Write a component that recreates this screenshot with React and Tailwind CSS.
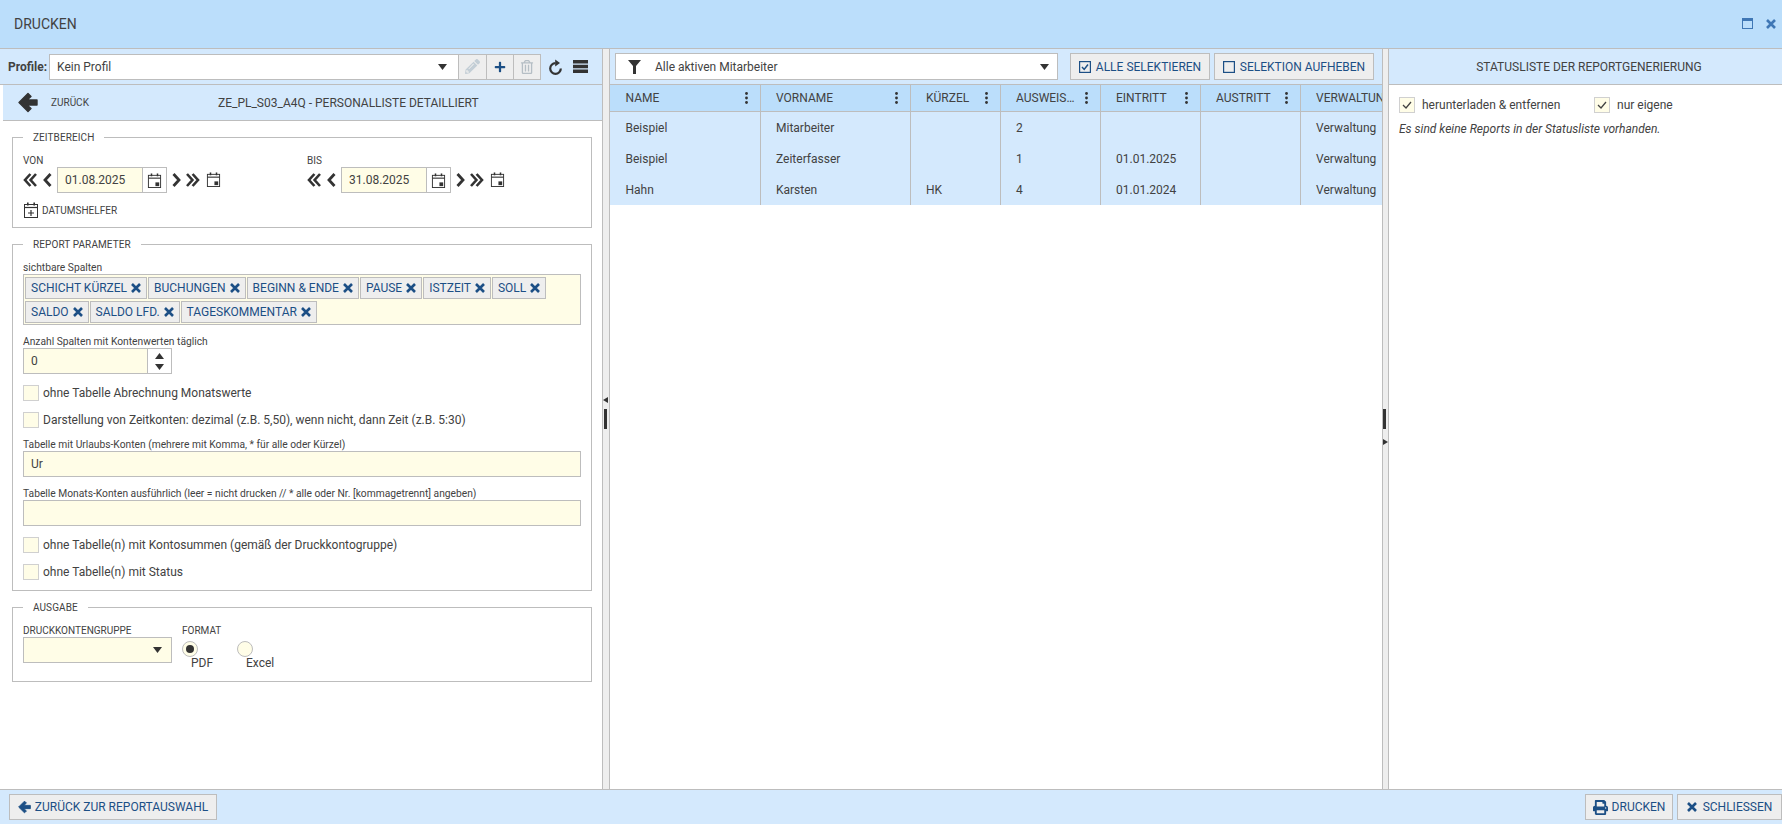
import React from 'react';
import { FaPrint, FaPencilAlt, FaPlus, FaRegTrashAlt } from 'react-icons/fa';

const Caret = ({ className = '' }) => (
  <svg width="9" height="6" viewBox="0 0 9 6" className={className}><polygon points="0,0 9,0 4.5,6" fill="#333" /></svg>
);

const XIcon = ({ size = 10, color = '#1c4f85', w = 2.6 }) => (
  <svg width={size} height={size} viewBox="0 0 10 10" fill="none" className="shrink-0"><path d="M1 1l8 8M9 1l-8 8" stroke={color} strokeWidth={w} /></svg>
);

const ArrowLeft = ({ w = 20, h = 21, color = '#333' }) => (
  <svg width={w} height={h} viewBox="0 0 20 21" className="shrink-0">
    <path d="M1 10.5L10 1.5L13 4.5L9 8H19V13H9L13 16.5L10 19.5Z" fill={color} stroke={color} strokeWidth="1.4" strokeLinejoin="round" />
  </svg>
);

const ChevL = () => (
  <svg width="9" height="14" viewBox="0 0 9 14" fill="none" className="shrink-0"><path d="M7.5 1L2 7l5.5 6" stroke="#333" strokeWidth="2.8" /></svg>
);
const ChevR = () => (
  <svg width="9" height="14" viewBox="0 0 9 14" fill="none" className="shrink-0"><path d="M1.5 1L7 7l-5.5 6" stroke="#333" strokeWidth="2.8" /></svg>
);
const DChevL = () => (
  <svg width="14" height="14" viewBox="0 0 14 14" fill="none" className="shrink-0"><path d="M7.4 1L2 7l5.4 6M13 1L7.6 7l5.4 6" stroke="#333" strokeWidth="2.6" /></svg>
);
const DChevR = () => (
  <svg width="14" height="14" viewBox="0 0 14 14" fill="none" className="shrink-0"><path d="M1 1l5.4 6L1 13M6.6 1L12 7l-5.4 6" stroke="#333" strokeWidth="2.6" /></svg>
);

const Cal = ({ plus = false, size = 15 }) => (
  <svg width={size} height={size} viewBox="0 0 16 16" fill="none" className="shrink-0">
    <rect x="1.5" y="2.5" width="13" height="13" stroke="#333" />
    <path d="M1.5 5.5h13" stroke="#333" strokeWidth="1.2" />
    <rect x="4" y="0.5" width="1.6" height="3" fill="#333" />
    <rect x="10.4" y="0.5" width="1.6" height="3" fill="#333" />
    {plus ? (
      <path d="M8 8v6M5 11h6" stroke="#333" strokeWidth="1.2" />
    ) : (
      <rect x="9" y="10" width="4" height="4" fill="#333" />
    )}
  </svg>
);

const Refresh = () => (
  <svg width="15" height="16" viewBox="0 0 15 16" fill="none" className="shrink-0">
    <path d="M7.5 4.2A5.3 5.3 0 1 0 12.8 9.5" stroke="#333" strokeWidth="2.2" />
    <polygon points="7.2,0.5 7.2,7.5 12,4" fill="#333" />
  </svg>
);

const Bars = () => (
  <svg width="15" height="13" viewBox="0 0 15 13" className="shrink-0"><path d="M0 0h15v3.4H0zM0 4.8h15v3.4H0zM0 9.6h15V13H0z" fill="#333" /></svg>
);

const Dots = () => (
  <svg width="3" height="12" viewBox="0 0 3 12" className="shrink-0"><circle cx="1.5" cy="1.5" r="1.4" fill="#333" /><circle cx="1.5" cy="6" r="1.4" fill="#333" /><circle cx="1.5" cy="10.5" r="1.4" fill="#333" /></svg>
);

const Funnel = () => (
  <svg width="13" height="14" viewBox="0 0 13 14" className="shrink-0"><polygon points="0,0 13,0 8,6 8,14 5,14 5,6" fill="#333" /></svg>
);

const BoxIcon = ({ checked }) => (
  <svg width="12" height="12" viewBox="0 0 12 12" fill="none" className="shrink-0">
    <rect x="0.6" y="0.6" width="10.8" height="10.8" stroke="#1c4f85" strokeWidth="1.2" />
    {checked && <path d="M3 6l2.2 2.4L9 3.5" stroke="#1c4f85" strokeWidth="1.5" />}
  </svg>
);

const Legend = ({ children }) => (
  <legend className="px-[10px] text-[10px] leading-[14px] h-[14px] text-[#424242] uppercase tracking-[0.1px]"><span className="block translate-y-px">{children}</span></legend>
);

const Label = ({ children, className = '' }) => (
  <div className={`leading-[12px] h-[12px] text-[#424242] whitespace-nowrap ${className || 'text-[10px]'}`}>{children}</div>
);

const DateGroup = ({ label, value, className = '' }) => (
  <div className={className}>
    <Label className="text-[10px] uppercase translate-y-px">{label}</Label>
    <div className="mt-px flex items-center h-[26px]">
      <DChevL />
      <span className="ml-[6px] flex"><ChevL /></span>
      <div className="ml-[5px] w-[110px] h-[26px] bg-[#fffde7] border border-[#bdbdbd] flex items-center">
        <span className="flex-1 pl-[7px] text-[12px] text-[#424242]">{value}</span>
        <span className="w-[24px] h-full border-l border-[#bdbdbd] bg-white flex items-center justify-center"><Cal /></span>
      </div>
      <span className="ml-[5px] flex"><ChevR /></span>
      <span className="ml-[5px] flex"><DChevR /></span>
      <span className="ml-[6px] -mt-[1px] flex"><Cal /></span>
    </div>
  </div>
);

const Tag = ({ children }) => (
  <span className="h-[22px] bg-[#eeeeee] border border-[#bdbdbd] flex items-center pl-[5px] pr-[5px] text-[12px] text-[#1c4f85] whitespace-nowrap gap-[4px]">
    {children}
    <XIcon />
  </span>
);

const CheckRow = ({ children, className = '' }) => (
  <div className={`flex items-center h-[16px] ${className}`}>
    <span className="w-[16px] h-[16px] bg-[#fffde7] border border-[#d0d0d0] shrink-0" />
    <span className="ml-[4px] text-[12px] text-[#424242] whitespace-nowrap">{children}</span>
  </div>
);

const Checked = ({ children, className = '' }) => (
  <div className={`flex items-center ${className}`}>
    <span className="w-[16px] h-[16px] bg-[#fffde7] border border-[#d0d0d0] flex items-center justify-center shrink-0">
      <svg width="10" height="8" viewBox="0 0 10 8" fill="none"><path d="M1 4l3 3 5-6" stroke="#424242" strokeWidth="1.3" /></svg>
    </span>
    <span className="ml-[7px] text-[12px] text-[#424242] whitespace-nowrap">{children}</span>
  </div>
);

const Btn = ({ children, className = '' }) => (
  <button className={`bg-[#eeeeee] border border-[#bdbdbd] flex items-center justify-center text-[12px] text-[#1c4f85] uppercase whitespace-nowrap ${className}`}>{children}</button>
);

const cols = [
  { t: 'NAME', w: 'w-[151px]' },
  { t: 'VORNAME', w: 'w-[150px]' },
  { t: 'KÜRZEL', w: 'w-[90px]' },
  { t: 'AUSWEIS…', w: 'w-[100px]' },
  { t: 'EINTRITT', w: 'w-[100px]' },
  { t: 'AUSTRITT', w: 'w-[100px]' },
  { t: 'VERWALTUNG', w: 'w-[81px]', last: true },
];
const rows = [
  ['Beispiel', 'Mitarbeiter', '', '2', '', '', 'Verwaltung'],
  ['Beispiel', 'Zeiterfasser', '', '1', '01.01.2025', '', 'Verwaltung'],
  ['Hahn', 'Karsten', 'HK', '4', '01.01.2024', '', 'Verwaltung'],
];

const Splitter = ({ children, className = '' }) => (
  <div className={`relative shrink-0 bg-[#eeeeee] border-x border-[#bdbdbd] ${className}`}>{children}</div>
);

export default function App() {
  return (
    <div className="w-full h-screen flex flex-col bg-white overflow-hidden font-['Roboto',sans-serif] text-[#424242]">
      <header className="h-[49px] shrink-0 bg-[#bbdefb] border-b border-[#bdbdbd] flex items-center pl-[14px] pr-[6px]">
        <span className="text-[14px] text-[#424242] flex-1">DRUCKEN</span>
        <svg width="11" height="11" viewBox="0 0 11 11" fill="none" className="mr-[13px] -mt-[1px]"><rect x="0.5" y="0.5" width="10" height="10" stroke="#3f77b5" /><rect x="0" y="0" width="11" height="3" fill="#3f77b5" /></svg>
        <span className="-mt-[1px] flex"><XIcon color="#3f77b5" /></span>
      </header>

      <div className="flex-1 flex min-h-0">
        {/* left */}
        <div className="w-[602px] shrink-0 flex flex-col pl-[3px]">
          <div className="-ml-[3px] pl-[3px] h-[36px] shrink-0 bg-[#d4e9fd] border-b border-[#bdbdbd] flex items-center">
            <span className="ml-[5px] w-[41px] text-[12px] font-bold text-[#424242]">Profile:</span>
            <div className="w-[410px] h-[26px] bg-white border border-[#bdbdbd] flex items-center pl-[7px] pr-[11px]">
              <span className="flex-1 text-[12px]">Kein Profil</span>
              <Caret />
            </div>
            <div className="flex h-[26px]">
              <span className="w-[28px] bg-[#eeeeee] border border-l-0 border-[#bdbdbd] flex items-center justify-center"><FaPencilAlt className="text-[15px] text-[#c3ced6]" /></span>
              <span className="w-[27px] bg-[#eeeeee] border border-l-0 border-[#bdbdbd] flex items-center justify-center"><FaPlus className="text-[12px] text-[#1c4f85]" /></span>
              <span className="w-[27px] bg-[#eeeeee] border border-l-0 border-[#bdbdbd] flex items-center justify-center"><FaRegTrashAlt className="text-[14px] text-[#b5bec5]" /></span>
            </div>
            <span className="ml-[7px] flex"><Refresh /></span>
            <span className="ml-[10px] -mt-[1px] flex"><Bars /></span>
          </div>
          <div className="h-[36px] shrink-0 bg-[#d4e9fd] border-b border-[#bdbdbd] flex items-center relative">
            <span className="ml-[15px] flex"><ArrowLeft /></span>
            <span className="ml-[13px] text-[10px] text-[#424242]">ZURÜCK</span>
            <span className="absolute left-[215px] text-[12px] text-[#424242] whitespace-nowrap">ZE_PL_S03_A4Q - PERSONALLISTE DETAILLIERT</span>
          </div>

          <div className="pl-[9px] pr-[10px] flex-1 min-h-0">
            <fieldset className="mt-[9px] border border-[#bdbdbd] px-[10px] pb-[9px]">
              <Legend>Zeitbereich</Legend>
              <div className="pt-[10px] flex">
                <DateGroup label="Von" value="01.08.2025" className="w-[284px]" />
                <DateGroup label="Bis" value="31.08.2025" />
              </div>
              <div className="mt-[9px] flex items-center h-[16px] gap-[3px]">
                <Cal plus size={16} />
                <span className="text-[10px] text-[#424242]">DATUMSHELFER</span>
              </div>
            </fieldset>

            <fieldset className="mt-[9px] border border-[#bdbdbd] px-[10px] pb-[10px]">
              <Legend>Report Parameter</Legend>
              <Label className="mt-[11px] text-[10.25px]">sichtbare Spalten</Label>
              <div className="h-[51px] bg-[#fffde7] border border-[#bdbdbd] p-[1px] pt-[2px] flex flex-wrap content-start gap-x-[1px] gap-y-[2px]">
                <Tag>SCHICHT KÜRZEL</Tag>
                <Tag>BUCHUNGEN</Tag>
                <Tag>BEGINN &amp; ENDE</Tag>
                <Tag>PAUSE</Tag>
                <Tag>ISTZEIT</Tag>
                <Tag>SOLL</Tag>
                <Tag>SALDO</Tag>
                <Tag>SALDO LFD.</Tag>
                <Tag>TAGESKOMMENTAR</Tag>
              </div>
              <Label className="mt-[11px] text-[10.25px]">Anzahl Spalten mit Kontenwerten täglich</Label>
              <div className="w-[149px] h-[26px] flex border border-[#bdbdbd] bg-white">
                <span className="w-[124px] bg-[#fffde7] border-r border-[#bdbdbd] pl-[7px] flex items-center text-[12px]">0</span>
                <span className="flex-1 flex flex-col items-center justify-center gap-[5px]">
                  <Caret className="rotate-180" />
                  <Caret />
                </span>
              </div>
              <CheckRow className="mt-[11px]">ohne Tabelle Abrechnung Monatswerte</CheckRow>
              <CheckRow className="mt-[11px]">Darstellung von Zeitkonten: dezimal (z.B. 5,50), wenn nicht, dann Zeit (z.B. 5:30)</CheckRow>
              <Label className="mt-[11px] text-[10.25px]">Tabelle mit Urlaubs-Konten (mehrere mit Komma, * für alle oder Kürzel)</Label>
              <div className="h-[26px] bg-[#fffde7] border border-[#bdbdbd] pl-[7px] flex items-center text-[12px]">Ur</div>
              <Label className="mt-[11px] text-[10.25px]">Tabelle Monats-Konten ausführlich (leer = nicht drucken // * alle oder Nr. [kommagetrennt] angeben)</Label>
              <div className="h-[26px] bg-[#fffde7] border border-[#bdbdbd]" />
              <CheckRow className="mt-[11px]">ohne Tabelle(n) mit Kontosummen (gemäß der Druckkontogruppe)</CheckRow>
              <CheckRow className="mt-[11px]">ohne Tabelle(n) mit Status</CheckRow>
            </fieldset>

            <fieldset className="mt-[9px] border border-[#bdbdbd] px-[10px] h-[82px]">
              <Legend>Ausgabe</Legend>
              <div className="pt-[10px] flex">
                <div className="w-[159px]">
                  <Label className="text-[10px] translate-y-px">DRUCKKONTENGRUPPE</Label>
                  <div className="mt-px w-[149px] h-[26px] bg-[#fffde7] border border-[#bdbdbd] flex items-center justify-end pr-[9px]"><Caret /></div>
                </div>
                <div>
                  <Label className="text-[10px] translate-y-px">FORMAT</Label>
                  <div className="flex mt-[5px] gap-[24px]">
                    <div className="flex flex-col items-start w-[31px]">
                      <span className="w-[16px] h-[16px] rounded-full bg-[#fffde7] border border-[#bdbdbd] flex items-center justify-center"><span className="w-[8px] h-[8px] rounded-full bg-[#333]" /></span>
                      <span className="ml-[9px] -mt-[1px] text-[12px] leading-[14px]">PDF</span>
                    </div>
                    <div className="flex flex-col items-start">
                      <span className="w-[16px] h-[16px] rounded-full bg-[#fffde7] border border-[#bdbdbd]" />
                      <span className="ml-[9px] -mt-[1px] text-[12px] leading-[14px]">Excel</span>
                    </div>
                  </div>
                </div>
              </div>
            </fieldset>
          </div>
        </div>

        <Splitter className="w-[8px]">
          <svg width="5" height="6" viewBox="0 0 5 6" className="absolute left-0 top-[348px]"><polygon points="5,0 5,6 0,3" fill="#333" /></svg>
          <span className="absolute left-[1px] top-[360px] w-[3px] h-[20px] bg-[#333]" />
        </Splitter>

        {/* middle */}
        <div className="flex-1 min-w-0 flex flex-col">
          <div className="h-[35px] shrink-0 bg-[#d4e9fd] flex items-center pl-[5px]">
            <div className="w-[443px] h-[27px] bg-white border border-[#bdbdbd] flex items-center pr-[8px]">
              <span className="ml-[12px] flex"><Funnel /></span>
              <span className="ml-[14px] flex-1 text-[12px]">Alle aktiven Mitarbeiter</span>
              <Caret />
            </div>
            <Btn className="ml-[12px] w-[140px] h-[27px] gap-[5px]"><BoxIcon checked />Alle selektieren</Btn>
            <Btn className="ml-[4px] w-[160px] h-[27px] gap-[5px]"><BoxIcon />Selektion aufheben</Btn>
          </div>
          <div className="flex h-[28px] bg-[#bbdefb] border-t border-b border-[#bdbdbd] overflow-hidden">
            {cols.map((c, k) => (
              <div key={c.t} className={`${c.w} shrink-0 flex items-center ${k === 0 ? 'pl-[15.5px]' : 'pl-[15px]'} text-[12px] whitespace-nowrap overflow-hidden ${c.last ? '' : 'border-r border-[#bdbdbd]'}`}>
                <span className="flex-1">{c.t}</span>
                {!c.last && <span className="mr-[12px] flex"><Dots /></span>}
              </div>
            ))}
          </div>
          {rows.map((r, i) => (
            <div key={i} className="flex h-[31px] bg-[#d4e9fd] overflow-hidden">
              {r.map((v, j) => (
                <div key={j} className={`${cols[j].w} shrink-0 flex items-center ${j === 0 ? 'pl-[15.5px]' : 'pl-[15px]'} text-[12px] whitespace-nowrap ${cols[j].last ? '' : 'border-r border-[#bdbdbd]'}`}>{v}</div>
              ))}
            </div>
          ))}
        </div>

        <Splitter className="w-[7px]">
          <span className="absolute left-0 top-[360px] w-[3px] h-[20px] bg-[#333]" />
          <svg width="5" height="6" viewBox="0 0 5 6" className="absolute left-0 top-[390px]"><polygon points="0,0 0,6 5,3" fill="#333" /></svg>
        </Splitter>

        {/* right */}
        <div className="w-[393px] shrink-0 flex flex-col">
          <div className="h-[36px] shrink-0 bg-[#d4e9fd] border-b border-[#bdbdbd] flex items-center justify-center pl-[7px] text-[12px]">STATUSLISTE DER REPORTGENERIERUNG</div>
          <div className="pl-[10px] pt-[11px]">
            <div className="flex">
              <Checked className="w-[195px]">herunterladen &amp; entfernen</Checked>
              <Checked>nur eigene</Checked>
            </div>
            <div className="mt-[9px] text-[12px] italic leading-[16px] -translate-y-[2px]">Es sind keine Reports in der Statusliste vorhanden.</div>
          </div>
        </div>
      </div>

      <footer className="h-[35px] shrink-0 bg-[#d4e9fd] border-t border-[#bdbdbd] flex items-center pl-[9px]">
        <Btn className="w-[208px] h-[26px] gap-[4px]"><ArrowLeft w={13} h={14} color="#1c4f85" />Zurück zur Reportauswahl</Btn>
        <div className="flex-1" />
        <Btn className="w-[88px] h-[26px] gap-[4px]"><FaPrint className="text-[15px]" />Drucken</Btn>
        <Btn className="ml-[4px] w-[105px] h-[26px] gap-[6px]"><XIcon />Schliessen</Btn>
      </footer>
    </div>
  );
}
